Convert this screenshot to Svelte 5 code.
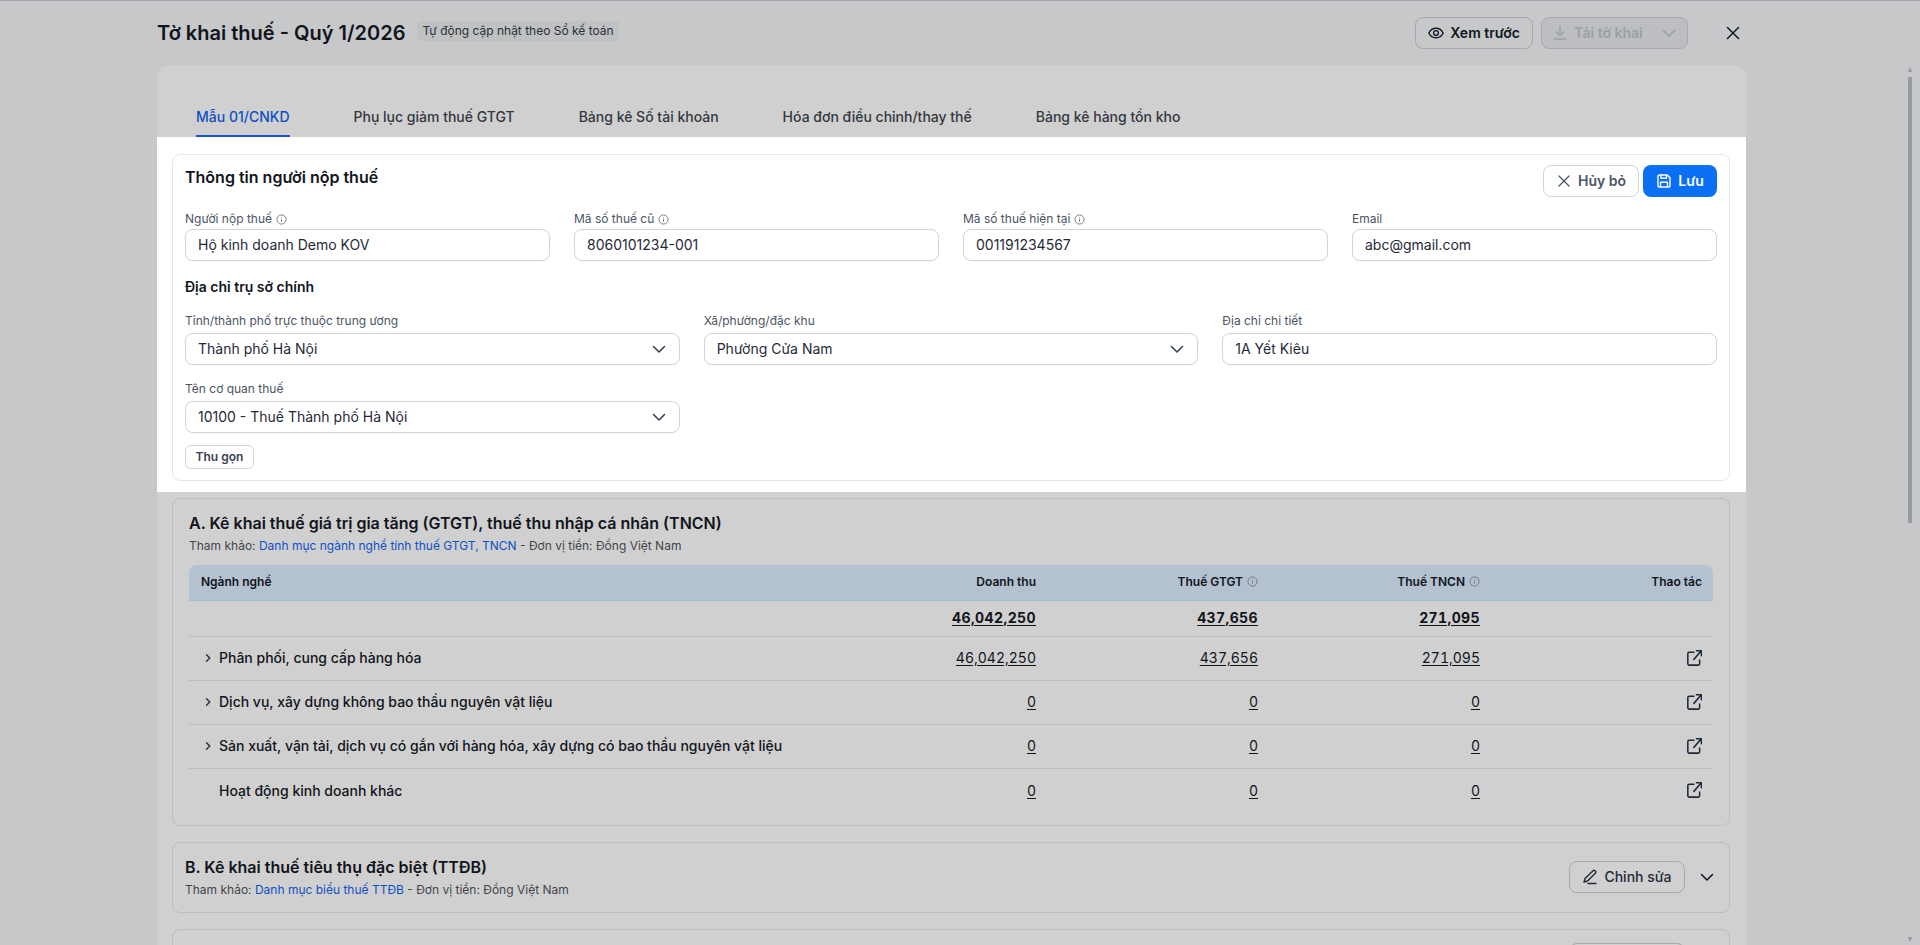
<script>
    const tabs = [
        "Mẫu 01/CNKD",
        "Phụ lục giảm thuế GTGT",
        "Bảng kê Số tài khoản",
        "Hóa đơn điều chỉnh/thay thế",
        "Bảng kê hàng tồn kho",
    ];
    const topFields = [
        { label: "Người nộp thuế", value: "Hộ kinh doanh Demo KOV", info: true },
        { label: "Mã số thuế cũ", value: "8060101234-001", info: true },
        { label: "Mã số thuế hiện tại", value: "001191234567", info: true },
        { label: "Email", value: "abc@gmail.com", info: false },
    ];
    const rows = [
        { name: "Phân phối, cung cấp hàng hóa", vals: ["46,042,250", "437,656", "271,095"], arrow: true },
        { name: "Dịch vụ, xây dựng không bao thầu nguyên vật liệu", vals: ["0", "0", "0"], arrow: true },
        { name: "Sản xuất, vận tải, dịch vụ có gắn với hàng hóa, xây dựng có bao thầu nguyên vật liệu", vals: ["0", "0", "0"], arrow: true },
        { name: "Hoạt động kinh doanh khác", vals: ["0", "0", "0"], arrow: false },
    ];
</script>

{#snippet info()}
    <svg class="info" viewBox="0 0 12 12" width="11" height="11" fill="none" stroke="currentColor" stroke-width="1">
        <circle cx="6" cy="6" r="5" />
        <path d="M6 5.400v3M6 3.400v.8" />
    </svg>
{/snippet}

{#snippet chevron(size, color)}
    <svg viewBox="0 0 16 16" width={size} height={size} fill="none" stroke={color} stroke-width="1.600" stroke-linecap="round" stroke-linejoin="round">
        <path d="M2.500 5.500L8 11l5.500-5.500" />
    </svg>
{/snippet}

{#snippet field(label, value, hasInfo, select)}
    <div class="field">
        <div class="label">{label}{#if hasInfo}{@render info()}{/if}</div>
        <div class="input">
            <span>{value}</span>
            {#if select}{@render chevron(16, "#374151")}{/if}
        </div>
    </div>
{/snippet}

<div class="page">
    <div class="topline"></div>
    <header>
        <div class="heading">
            <h1>Tờ khai thuế - Quý 1/2026</h1>
            <span class="badge">Tự động cập nhật theo Sổ kế toán</span>
        </div>
        <div class="actions">
            <button class="btn preview">
                <svg viewBox="0 0 16 16" width="16" height="16" fill="none" stroke="#111827" stroke-width="1.400">
                    <path d="M.8 8c1.600-3.200 4-4.800 7.200-4.800s5.600 1.600 7.200 4.800c-1.600 3.200-4 4.800-7.200 4.800S2.400 11.200.8 8z" />
                    <circle cx="8" cy="8" r="2.400" />
                </svg>
                Xem trước
            </button>
            <button class="btn download">
                <svg viewBox="0 0 16 16" width="16" height="16" fill="none" stroke="#9a9fa6" stroke-width="1.400" stroke-linecap="round" stroke-linejoin="round">
                    <path d="M8 2v8M4.500 7L8 10.500 11.500 7M2.500 14h11" />
                </svg>
                <span>Tải tờ khai</span>
                <span class="dl-chevron">{@render chevron(16, "#9a9fa6")}</span>
            </button>
            <svg class="close" viewBox="0 0 16 16" width="16" height="16" fill="none" stroke="#111827" stroke-width="1.500" stroke-linecap="round">
                <path d="M2.500 2.500l11 11M13.500 2.500l-11 11" />
            </svg>
        </div>
    </header>

    <main>
        <nav>
            {#each tabs as tab, i}
                <div class="tab" class:active={i === 0}>{tab}</div>
            {/each}
        </nav>

        <section class="spotlight">
            <div class="card taxpayer">
                <div class="card-head">
                    <h2>Thông tin người nộp thuế</h2>
                    <div class="card-actions">
                        <button class="btn cancel">
                            <svg viewBox="0 0 16 16" width="16" height="16" fill="none" stroke="#4b5563" stroke-width="1.300" stroke-linecap="round">
                                <path d="M3 3l10 10M13 3L3 13" />
                            </svg>
                            Hủy bỏ
                        </button>
                        <button class="btn save">
                            <svg viewBox="0 0 16 16" width="16" height="16" fill="none" stroke="#fff" stroke-width="1.400" stroke-linejoin="round">
                                <path d="M2 3.200C2 2.500 2.500 2 3.200 2h8l2.800 2.800v8c0 .7-.5 1.200-1.200 1.200H3.200C2.500 14 2 13.500 2 12.800z" />
                                <path d="M5 2v3.200h5.500V2M4.500 14V9.200h7V14" />
                            </svg>
                            Lưu
                        </button>
                    </div>
                </div>
                <div class="grid four">
                    {#each topFields as f}
                        {@render field(f.label, f.value, f.info, false)}
                    {/each}
                </div>
                <h3>Địa chỉ trụ sở chính</h3>
                <div class="grid three">
                    {@render field("Tỉnh/thành phố trực thuộc trung ương", "Thành phố Hà Nội", false, true)}
                    {@render field("Xã/phường/đặc khu", "Phường Cửa Nam", false, true)}
                    {@render field("Địa chỉ chi tiết", "1A Yết Kiêu", false, false)}
                    {@render field("Tên cơ quan thuế", "10100 - Thuế Thành phố Hà Nội", false, true)}
                </div>
                <button class="btn collapse">Thu gọn</button>
            </div>
        </section>

        <section class="dimmed">
            <div class="card part-a">
                <h2>A. Kê khai thuế giá trị gia tăng (GTGT), thuế thu nhập cá nhân (TNCN)</h2>
                <p class="note">Tham khảo: <span class="link">Danh mục ngành nghề tính thuế GTGT, TNCN</span> - Đơn vị tiền: Đồng Việt Nam</p>
                <div class="table">
                    <div class="tr thead">
                        <div class="td name">Ngành nghề</div>
                        <div class="td num">Doanh thu</div>
                        <div class="td num">Thuế GTGT{@render info()}</div>
                        <div class="td num">Thuế TNCN{@render info()}</div>
                        <div class="td num">Thao tác</div>
                    </div>
                    <div class="tr total">
                        <div class="td name"></div>
                        <div class="td num"><u>46,042,250</u></div>
                        <div class="td num"><u>437,656</u></div>
                        <div class="td num"><u>271,095</u></div>
                        <div class="td num"></div>
                    </div>
                    {#each rows as row}
                        <div class="tr body">
                            <div class="td name">
                                <span class="arrow">
                                    {#if row.arrow}
                                        <svg viewBox="0 0 10 10" width="10" height="10" fill="none" stroke="#1f2937" stroke-width="1.300" stroke-linecap="round" stroke-linejoin="round">
                                            <path d="M3.500 1.800L6.800 5 3.500 8.200" />
                                        </svg>
                                    {/if}
                                </span>
                                {row.name}
                            </div>
                            {#each row.vals as v}
                                <div class="td num"><u>{v}</u></div>
                            {/each}
                            <div class="td num">
                                <svg class="open" viewBox="1.300 1 13.500 14.500" width="15" height="16" fill="none" stroke="#1f2937" stroke-width="1.400" stroke-linecap="round" stroke-linejoin="round">
                                    <path d="M7.500 3H3.200c-.8 0-1.200.4-1.200 1.200v9.300c0 .8.400 1.200 1.200 1.200h8.300c.8 0 1.200-.4 1.200-1.200V10" />
                                    <path d="M7.500 9.500L14 2M9.800 1.700h4.500v4.500" />
                                </svg>
                            </div>
                        </div>
                    {/each}
                </div>
            </div>

            <div class="card collapsed">
                <div>
                    <h2>B. Kê khai thuế tiêu thụ đặc biệt (TTĐB)</h2>
                    <p class="note">Tham khảo: <span class="link">Danh mục biểu thuế TTĐB</span> - Đơn vị tiền: Đồng Việt Nam</p>
                </div>
                <div class="collapsed-actions">
                    <button class="btn edit">
                        <svg viewBox="0 0 16 16" width="16" height="16" fill="none" stroke="#1f2937" stroke-width="1.400" stroke-linecap="round" stroke-linejoin="round">
                            <path d="M2 13l1-3.500L10.800 2a1.600 1.600 0 0 1 2.500 2.300L5.500 12 2 13zM6 14.500h8" />
                        </svg>
                        Chỉnh sửa
                    </button>
                    {@render chevron(16, "#111827")}
                </div>
            </div>

            <div class="card next">
                <button class="btn edit ghost"></button>
            </div>
        </section>
    </main>

    <div class="scroll-up"></div>
    <div class="scroll-thumb"></div>
    <div class="scroll-down"></div>
</div>

<style>
    :global(body) {
        margin: 0;
        background: #c7c8ca;
        font-family: Inter, "Noto Sans", sans-serif;
        overflow: hidden;
    }
    .page {
        position: relative;
        height: 945px;
        overflow: hidden;
        background: #c7c8ca;
        color: #11151b;
    }
    .topline {
        height: 1px;
        background: #a3a5a8;
    }
    header {
        height: 64px;
        padding: 0 179px 0 157px;
        display: flex;
        justify-content: space-between;
        box-sizing: border-box;
    }
    .heading {
        display: flex;
        align-items: flex-start;
        gap: 12px;
        padding-top: 20px;
    }
    h1 {
        margin: 0;
        font-size: 20px;
        line-height: 24px;
        font-weight: 600;
    }
    .badge {
        font-size: 12px;
        line-height: 20px;
        padding: 0 5px;
        border-radius: 4px;
        background: #bfc1c3;
        color: #2b3037;
    }
    .actions {
        display: flex;
        align-items: flex-start;
        padding-top: 16px;
    }
    .btn {
        display: flex;
        align-items: center;
        justify-content: center;
        gap: 6px;
        box-sizing: border-box;
        height: 32px;
        border-radius: 8px;
        border: 1px solid #a7a9ad;
        background: transparent;
        font: 600 14px/20px Inter, sans-serif;
        color: #11151b;
        padding: 0;
    }
    .preview {
        width: 118px;
    }
    .download {
        width: 147px;
        margin-left: 8px;
        background: #bcbec1;
        color: #9a9fa6;
    }
    .dl-chevron {
        display: flex;
        margin-left: 12px;
    }
    .close {
        margin: 8px 0 0 37px;
    }
    main {
        margin: 0 174px 0 157px;
        background: #d0d0d0;
        border-radius: 12px 12px 0 0;
    }
    nav {
        height: 72px;
        padding: 0 39px;
        box-sizing: border-box;
        display: flex;
        gap: 64px;
    }
    .tab {
        height: 72px;
        box-sizing: border-box;
        padding-top: 42px;
        font-size: 14px;
        line-height: 20px;
        font-weight: 500;
        color: #33383f;
    }
    .tab.active {
        color: #0f4fc4;
        border-bottom: 2px solid #1a56c8;
    }
    .spotlight {
        background: #fff;
        padding: 17px 16px 11px 15px;
    }
    .card {
        border: 1px solid #bcbdbf;
        border-radius: 8px;
        box-sizing: border-box;
    }
    .taxpayer {
        height: 327px;
        border-color: #e5e7eb;
        padding: 10px 12px;
        color: #1f2937;
    }
    .card-head {
        display: flex;
        justify-content: space-between;
        height: 46px;
    }
    h2 {
        margin: 0;
        font-size: 16px;
        line-height: 24px;
        font-weight: 600;
        color: #11151b;
    }
    .card-actions {
        display: flex;
        gap: 4px;
    }
    .cancel {
        width: 96px;
        border-color: #d1d5db;
        background: #fff;
        color: #4b5563;
    }
    .save {
        width: 74px;
        border: 0;
        background: #0a6ff2;
        color: #fff;
    }
    .grid {
        display: grid;
        column-gap: 24px;
    }
    .four {
        grid-template-columns: repeat(4, 1fr);
    }
    .three {
        grid-template-columns: repeat(3, 1fr);
        row-gap: 16px;
    }
    .label {
        display: flex;
        align-items: center;
        gap: 4px;
        height: 16px;
        margin-bottom: 2px;
        font-size: 12px;
        line-height: 16px;
        color: #4b5563;
    }
    .three .label {
        margin-bottom: 4px;
    }
    .info {
        color: #6f757d;
        flex: none;
    }
    .input {
        height: 32px;
        box-sizing: border-box;
        border: 1px solid #d1d5db;
        border-radius: 8px;
        padding: 0 12px;
        display: flex;
        align-items: center;
        justify-content: space-between;
        font-size: 14px;
        line-height: 20px;
        color: #1f2937;
        box-shadow: 0 1px 2px rgba(0, 0, 0, 0.04);
    }
    h3 {
        margin: 16px 0;
        font-size: 14px;
        line-height: 20px;
        font-weight: 600;
        color: #11151b;
    }
    .collapse {
        width: 69px;
        height: 24px;
        margin-top: 12px;
        border-color: #d1d5db;
        border-radius: 6px;
        background: #fff;
        font-size: 12px;
        color: #374151;
    }
    .dimmed {
        padding: 6px 16px 0 15px;
        display: flex;
        flex-direction: column;
        gap: 16px;
    }
    .part-a {
        height: 328px;
        padding: 12px 16px 0;
    }
    .note {
        margin: 2px 0 0;
        font-size: 12px;
        line-height: 18px;
        color: #41464d;
    }
    .link {
        color: #0f4fc4;
    }
    .table {
        margin-top: 10px;
    }
    .tr {
        display: grid;
        grid-template-columns: 1fr repeat(4, 222px);
        font-size: 14px;
        line-height: 20px;
    }
    .td {
        padding: 0 11px 0 12px;
        display: flex;
        align-items: center;
        min-width: 0;
    }
    .num {
        justify-content: flex-end;
        gap: 4px;
    }
    .thead {
        height: 36px;
        border-radius: 8px 8px 0 0;
        background: #b4c1d1;
        border-bottom: 1px solid #a6bad4;
        box-sizing: border-box;
        font-size: 12px;
        font-weight: 600;
        padding-bottom: 2px;
    }
    .total {
        height: 36px;
        padding-bottom: 2px;
        border-bottom: 1px solid #bcbdbf;
        box-sizing: border-box;
        font-weight: 700;
    }
    .total u {
        letter-spacing: 0.4px;
    }
    .body {
        height: 44px;
        padding-bottom: 2px;
        border-bottom: 1px solid #bcbdbf;
        box-sizing: border-box;
    }
    .body:last-child {
        padding-bottom: 0;
        border-bottom: 0;
    }
    .body .name {
        font-weight: 500;
    }
    .arrow {
        width: 16px;
        margin-left: 2px;
        display: flex;
        flex: none;
    }
    .body:last-child .open {
        margin-bottom: 2px;
    }
    u {
        text-underline-offset: 2px;
        font-variant-numeric: tabular-nums;
    }
    .collapsed {
        height: 71px;
        padding: 12px 14px 0 12px;
        display: flex;
        justify-content: space-between;
    }
    .collapsed-actions {
        display: flex;
        align-items: flex-start;
        gap: 14px;
        padding-top: 6px;
    }
    .collapsed-actions > svg {
        margin-top: 8px;
    }
    .edit {
        width: 116px;
        font-weight: 500;
        color: #1f2937;
    }
    .next {
        height: 60px;
        padding: 13px 44px 0 0;
        display: flex;
        justify-content: flex-end;
        border-radius: 8px 8px 0 0;
    }
    .scroll-thumb {
        position: absolute;
        left: 1908px;
        top: 77px;
        width: 4px;
        height: 446px;
        background: #969a9e;
    }
    .scroll-up,
    .scroll-down {
        position: absolute;
        left: 1908px;
        width: 0;
        height: 0;
        border-left: 2px solid transparent;
        border-right: 2px solid transparent;
    }
    .scroll-up {
        top: 67px;
        border-bottom: 5px solid #969a9e;
    }
    .scroll-down {
        top: 937px;
        border-top: 5px solid #969a9e;
    }
</style>
